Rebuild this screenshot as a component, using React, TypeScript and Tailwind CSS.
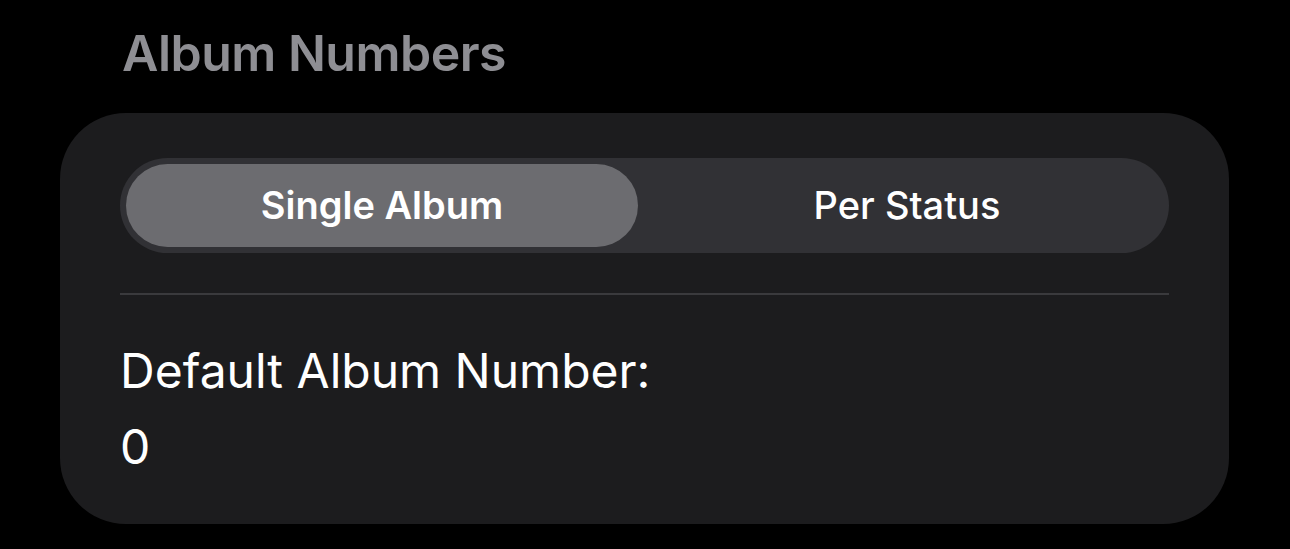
export default function App() {
  return (
    <div className="min-h-screen bg-black pt-[28px] pl-[60px]" style={{ fontFamily: 'Inter, "Noto Sans", sans-serif' }}>
      <h1 className="pl-[62px] text-[50px] font-semibold leading-none tracking-[-0.5px] text-[#8e8e93]">Album Numbers</h1>

      <div className="mt-[35px] h-[411px] w-[1169px] rounded-[66px] bg-[#1c1c1e] px-[60px] pt-[45px]">
        {/* Segmented control */}
        <div className="flex h-[95px] rounded-full bg-[#313135] p-[6px]">
          <div className="flex flex-1 pr-[7px]">
            <div className="flex flex-1 items-center justify-center rounded-full bg-[#6c6c70] text-[38px] font-semibold text-white">
              Single Album
            </div>
          </div>
          <div className="flex flex-1 items-center justify-center pl-[6px] text-[38px] font-medium text-white">
            Per Status
          </div>
        </div>

        <div className="mt-[40px] h-[2px] bg-[#3a3a3d]" />

        <div className="mt-[52px] text-[48px] leading-none text-white">Default Album Number:</div>
        <div className="mt-[28px] text-[48px] leading-none text-white">0</div>
      </div>
    </div>
  )
}
